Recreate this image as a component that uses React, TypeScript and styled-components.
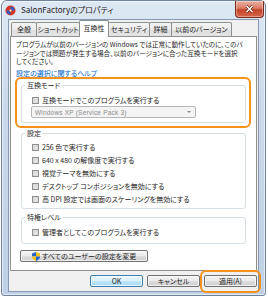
import React from 'react';
import styled, { createGlobalStyle, css } from 'styled-components';

const GlobalStyle = createGlobalStyle`
  html, body { margin: 0; padding: 0; background: #fff; }
  body {
    font-family: "Noto Sans CJK JP", "Liberation Sans", sans-serif;
    font-feature-settings: "palt";
    font-size: 7px;
    color: #262626;
  }
`;

const Window = styled.div`
  box-sizing: border-box;
  width: 265px;
  height: 296px;
  margin-left: 1px;
  border: 1px solid #6f839c;
  border-radius: 6px 6px 3px 3px;
  background: linear-gradient(180deg, #dde8f4 0%, #cbdaeb 35%, #bfd1e6 100%);
  box-shadow: inset 0 0 0 1px rgba(255, 255, 255, 0.55);
  display: flex;
  flex-direction: column;
`;

const TitleBar = styled.div`
  height: 18px;
  display: flex;
  align-items: flex-start;
  padding-left: 3px;
`;

const AppIcon = styled.svg`
  margin-top: 4px;
  flex: none;
`;

const Title = styled.span`
  margin: 4px 0 0 5px;
  font-size: 8px;
  line-height: 10px;
  color: #1b1b1b;
  white-space: nowrap;
`;

const Close = styled.div`
  margin-left: auto;
  margin-right: 1px;
  width: 29px;
  height: 17px;
  box-sizing: border-box;
  border: 1px solid #7b2a1e;
  border-top: none;
  border-radius: 0 0 4px 4px;
  background: linear-gradient(180deg, #eab0a2 0%, #db7c65 45%, #c4432b 55%, #d5684a 100%);
  box-shadow: inset 0 0 0 1px rgba(255, 255, 255, 0.35);
  display: flex;
  align-items: center;
  justify-content: center;
`;

const Client = styled.div`
  box-sizing: border-box;
  width: 251px;
  height: 273px;
  margin: 0 0 0 6px;
  border: 1px solid #8799b0;
  background: #f0f0f0;
  padding: 0 1px;
  display: flex;
  flex-direction: column;
`;

const TabRow = styled.div`
  display: flex;
  align-items: flex-end;
  height: 16px;
  padding-left: 1px;
  position: relative;
  z-index: 1;
`;

const Tab = styled.div<{ $w: number; $active?: boolean }>`
  box-sizing: border-box;
  width: ${p => p.$w}px;
  height: 14px;
  margin-right: -1px;
  border: 1px solid #8e8f8f;
  border-bottom: none;
  border-radius: 2px 2px 0 0;
  background: linear-gradient(180deg, #f4f4f4 0%, #ebebeb 50%, #dedede 51%, #e4e4e4 100%);
  display: flex;
  align-items: center;
  justify-content: center;
  line-height: 1;
  white-space: nowrap;
  ${p => p.$active && css`
    height: 17px;
    margin-bottom: -1px;
    background: #fff;
    position: relative;
    z-index: 2;
    padding-bottom: 2px;
  `}
`;

const Panel = styled.div`
  box-sizing: border-box;
  width: 247px;
  height: 235px;
  border: 1px solid #8e8f8f;
  background: #fff;
  padding: 3px 0 0 5px;
  display: flex;
  flex-direction: column;
  align-items: flex-start;
`;

const Intro = styled.p`
  margin: 0;
  font-size: 6.6px;
  line-height: 8.5px;
  white-space: nowrap;
`;

const HelpLink = styled.a`
  margin-top: 3.5px;
  line-height: 8px;
  color: #0066cc;
  text-decoration: none;
`;

const Group = styled.div<{ $mt: number; $pt: number; $pb: number; $mark?: boolean }>`
  position: relative;
  box-sizing: border-box;
  width: 225px;
  margin: ${p => p.$mt}px 0 0 5px;
  border: 1px solid #d5dfe5;
  border-radius: 3px;
  padding: 0 4px ${p => p.$pb}px 10px;
  display: flex;
  flex-direction: column;
  align-items: flex-start;

  & > *:nth-child(2) {
    margin-top: ${p => p.$pt}px;
  }

  ${p => p.$mark && css`
    &::after {
      content: '';
      position: absolute;
      left: -7px;
      right: -6px;
      top: -9px;
      bottom: -6px;
      border: 2px solid #f5921e;
      border-radius: 6px;
      pointer-events: none;
    }
  `}
`;

const Legend = styled.span`
  margin: -5px 0 0 -7px;
  padding: 0 2px;
  line-height: 8px;
  background: #fff;
`;

const Row = styled.div<{ $h: number }>`
  display: flex;
  align-items: center;
  gap: 3px;
  height: ${p => p.$h}px;
  white-space: nowrap;
`;

const Check = styled.span`
  flex: none;
  width: 7px;
  height: 7px;
  box-sizing: border-box;
  border: 1px solid #8f8f8f;
  background: linear-gradient(135deg, #cdcdcd 0%, #e4e4e4 60%, #f2f2f2 100%);
  box-shadow: inset 0 0 0 1px #dcdcdc;
`;

const Select = styled.div`
  box-sizing: border-box;
  width: 165px;
  height: 12px;
  margin: 1.5px 0 0 -1px;
  border: 1px solid #b5b8bb;
  border-radius: 2px;
  background: #f4f4f4;
  color: #8c8c8c;
  display: flex;
  align-items: center;
  padding: 0 4px 0 3px;
  font-family: "Liberation Sans", "Noto Sans CJK JP", sans-serif;
  font-size: 6.5px;
  letter-spacing: 0.2px;
`;

const Arrow = styled.span`
  margin-left: auto;
  width: 0;
  height: 0;
  border-left: 2px solid transparent;
  border-right: 2px solid transparent;
  border-top: 2px solid #8c8c8c;
`;

const Button = styled.div<{ $w: number; $default?: boolean }>`
  box-sizing: border-box;
  width: ${p => p.$w}px;
  height: 12px;
  border: 1px solid ${p => (p.$default ? '#3c7fb1' : '#707070')};
  border-radius: 2px;
  background: ${p => (p.$default
    ? 'linear-gradient(180deg, #eaf6fd 0%, #d9f0fc 50%, #bee6fd 51%, #a7d9f5 100%)'
    : 'linear-gradient(180deg, #f2f2f2 0%, #ebebeb 50%, #dddddd 51%, #cfcfcf 100%)')};
  box-shadow: inset 0 0 0 1px rgba(255, 255, 255, 0.7);
  display: flex;
  align-items: center;
  justify-content: center;
  gap: 2px;
  line-height: 1;
  white-space: nowrap;
`;

const WideButton = styled(Button)`
  margin: 6px 0 0 4px;
`;

const Footer = styled.div`
  display: flex;
  justify-content: flex-end;
  gap: 4px;
  margin-top: 4px;
`;

const Marked = styled.div`
  position: relative;

  &::after {
    content: '';
    position: absolute;
    left: -4px;
    right: -4px;
    top: -5px;
    bottom: -6px;
    border: 2px solid #f5921e;
    border-radius: 6px;
    pointer-events: none;
  }
`;

const tabs = [
  { label: '全般', w: 26 },
  { label: 'ショートカット', w: 44 },
  { label: '互換性', w: 30, active: true },
  { label: 'セキュリティ', w: 42 },
  { label: '詳細', w: 23 },
  { label: '以前のバージョン', w: 61 },
];

const settings = [
  '256 色で実行する',
  '640 x 480 の解像度で実行する',
  '視覚テーマを無効にする',
  'デスクトップ コンポジションを無効にする',
  '高 DPI 設定では画面のスケーリングを無効にする',
];

const Shield = () => (
  <svg width="8" height="9" viewBox="0 0 8 9">
    <defs>
      <clipPath id="sh">
        <path d="M4 0 L8 1.4 V4.8 C8 6.8 6.2 8.3 4 9 C1.8 8.3 0 6.8 0 4.8 V1.4 Z" />
      </clipPath>
    </defs>
    <g clipPath="url(#sh)">
      <rect x="0" y="0" width="4" height="4.5" fill="#2a63c6" />
      <rect x="4" y="0" width="4" height="4.5" fill="#f4c21f" />
      <rect x="0" y="4.5" width="4" height="4.5" fill="#f4c21f" />
      <rect x="4" y="4.5" width="4" height="4.5" fill="#2a63c6" />
    </g>
  </svg>
);

export default function App() {
  return (
    <>
      <GlobalStyle />
      <Window>
        <TitleBar>
          <AppIcon width="11" height="11" viewBox="0 0 11 11">
            <circle cx="5.5" cy="5.5" r="5" fill="#d8352a" />
            <path d="M5.5 1.5 A4 4 0 0 1 9.5 5.5 L7 5.5 A1.5 1.5 0 0 0 5.5 4 Z" fill="#2b5fc4" />
            <path d="M5.5 9.5 A4 4 0 0 1 1.5 5.5 L4 5.5 A1.5 1.5 0 0 0 5.5 7 Z" fill="#2b5fc4" />
            <circle cx="5.5" cy="5.5" r="1" fill="#fff" />
          </AppIcon>
          <Title>SalonFactoryのプロパティ</Title>
          <Close>
            <svg width="9" height="8" viewBox="0 0 9 8">
              <path d="M1.5 1 L7.5 7 M7.5 1 L1.5 7" stroke="#5a1b12" strokeWidth="2.6" />
              <path d="M1.5 1 L7.5 7 M7.5 1 L1.5 7" stroke="#fff" strokeWidth="1.5" />
            </svg>
          </Close>
        </TitleBar>
        <Client>
          <TabRow>
            {tabs.map(t => (
              <Tab key={t.label} $w={t.w} $active={t.active}>{t.label}</Tab>
            ))}
          </TabRow>
          <Panel>
            <Intro>
              プログラムが以前のバージョンの Windows では正常に動作していたのに、このバ<br />
              ージョンでは問題が発生する場合、以前のバージョンに合った互換モードを選択<br />
              してください。
            </Intro>
            <HelpLink href="#">設定の選択に関するヘルプ</HelpLink>

            <Group $mt={8} $pt={6.5} $pb={4} $mark>
              <Legend>互換モード</Legend>
              <Row $h={9}><Check />互換モードでこのプログラムを実行する</Row>
              <Select>Windows XP (Service Pack 3)<Arrow /></Select>
            </Group>

            <Group $mt={10} $pt={3.5} $pb={2.5}>
              <Legend>設定</Legend>
              {settings.map(s => (
                <Row key={s} $h={13}><Check />{s}</Row>
              ))}
            </Group>

            <Group $mt={8} $pt={4.5} $pb={4.5}>
              <Legend>特権レベル</Legend>
              <Row $h={13}><Check />管理者としてこのプログラムを実行する</Row>
            </Group>

            <WideButton $w={128}><Shield />すべてのユーザーの設定を変更</WideButton>
          </Panel>
          <Footer>
            <Button $w={53} $default>OK</Button>
            <Button $w={53}>キャンセル</Button>
            <Marked><Button $w={53}>適用(A)</Button></Marked>
          </Footer>
        </Client>
      </Window>
    </>
  );
}
